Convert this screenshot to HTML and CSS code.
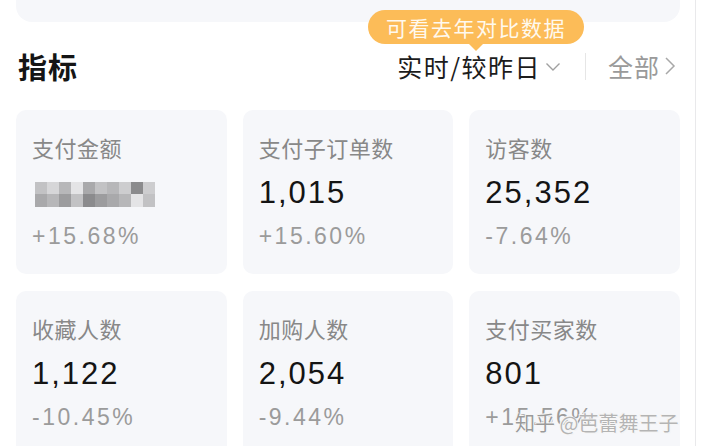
FILE: index.html
```html
<!DOCTYPE html>
<html lang="zh-CN">
<head>
<meta charset="utf-8">
<title>指标</title>
<link rel="stylesheet" href="styles.css">
</head>
<body>
<div class="page">
  <div class="top-card"></div>
  <div class="header">
    <div class="title">指标</div>
    <div class="actions">
      <div class="dropdown">实时/较昨日
        <svg class="chev-down" width="16" height="10" viewBox="0 0 16 10"><path d="M1.5 1.5 L8 8 L14.5 1.5" fill="none" stroke="#a0a0a0" stroke-width="1.4"/></svg>
      </div>
      <div class="divider"></div>
      <div class="all">全部
        <svg class="chev-right" width="12" height="20" viewBox="0 0 12 20"><path d="M2 2 L10 10 L2 18" fill="none" stroke="#a8a8a8" stroke-width="1.5"/></svg>
      </div>
    </div>
  </div>
  <div class="tooltip">可看去年对比数据<span class="tip-arrow"></span></div>
  <div class="grid">
    <div class="card">
      <div class="label">支付金额</div>
      <div class="value">
        <div class="mosaic">
          <i class="s3"></i><i class="s1"></i><i class="s4"></i><i class="s0"></i><i class="s5"></i><i class="s3"></i><i class="s4"></i><i class="s2"></i><i class="s7"></i><i class="s2"></i>
          <i class="s5"></i><i class="s4"></i><i class="s6"></i><i class="s3"></i><i class="s7"></i><i class="s6"></i><i class="s5"></i><i class="s4"></i><i class="s0"></i><i class="s3"></i>
        </div>
      </div>
      <div class="pct">+15.68%</div>
    </div>
    <div class="card">
      <div class="label">支付子订单数</div>
      <div class="value">1,015</div>
      <div class="pct">+15.60%</div>
    </div>
    <div class="card">
      <div class="label">访客数</div>
      <div class="value">25,352</div>
      <div class="pct">-7.64%</div>
    </div>
    <div class="card">
      <div class="label">收藏人数</div>
      <div class="value">1,122</div>
      <div class="pct">-10.45%</div>
    </div>
    <div class="card">
      <div class="label">加购人数</div>
      <div class="value">2,054</div>
      <div class="pct">-9.44%</div>
    </div>
    <div class="card">
      <div class="label">支付买家数</div>
      <div class="value">801</div>
      <div class="pct">+15.56%</div>
    </div>
  </div>
  <div class="watermark"><span class="wm-a">知乎</span> <span class="wm-b">@芭蕾舞王子</span></div>
</div>
</body>
</html>
```
FILE: styles.css
```css
* { box-sizing: border-box; }
html, body {
  margin: 0;
  padding: 0;
  background: #ffffff;
  overflow: hidden;
}
body {
  width: 704px;
  height: 446px;
  font-family: "Liberation Sans", "Noto Sans CJK SC", sans-serif;
}
.page {
  position: relative;
  width: 696px;
  height: 446px;
  border-right: 1px solid #e9e9eb;
  padding: 0 16px 0 16px;
}
.top-card {
  height: 22px;
  width: 664px;
  background: #f6f7fa;
  border-radius: 0 0 16px 16px;
}
.header {
  height: 88px;
  display: flex;
  align-items: center;
  justify-content: space-between;
  width: 664px;
}
.title {
  font-family: "Noto Sans CJK SC", sans-serif;
  font-weight: 700;
  font-size: 29px;
  color: #151515;
  padding-left: 2px;
  letter-spacing: 1px;
}
.actions {
  display: flex;
  align-items: center;
  margin-right: 4px;
}
.dropdown {
  font-family: "Noto Sans CJK SC", sans-serif;
  font-size: 25px;
  color: #1c1c1c;
  letter-spacing: 1.5px;
  display: flex;
  align-items: center;
}
.chev-down {
  margin-left: 4px;
  margin-top: 2px;
}
.divider {
  width: 1px;
  height: 27px;
  background: #e6e6e6;
  margin: 0 22px 0 24px;
}
.all {
  font-family: "Noto Sans CJK SC", sans-serif;
  font-size: 25px;
  color: #9a9a9a;
  letter-spacing: 1px;
  display: flex;
  align-items: center;
}
.chev-right {
  margin-left: 4px;
}
.tooltip {
  position: absolute;
  left: 368px;
  top: 10px;
  width: 216px;
  height: 34px;
  border-radius: 17px;
  background: #fcbc58;
  color: #fff9ee;
  font-family: "Noto Sans CJK SC", sans-serif;
  font-size: 21px;
  line-height: 34px;
  text-align: center;
  letter-spacing: 1.5px;
}
.tip-arrow {
  position: absolute;
  left: 101px;
  bottom: -7px;
  width: 0;
  height: 0;
  border-left: 7px solid transparent;
  border-right: 7px solid transparent;
  border-top: 7px solid #fcbc58;
}
.grid {
  display: grid;
  grid-template-columns: repeat(3, 1fr);
  column-gap: 16px;
  row-gap: 17px;
  width: 664px;
}
.card {
  background: #f6f7fa;
  border-radius: 10px;
  height: 164px;
  padding: 23px 16px 0 16px;
}
.label {
  font-family: "Noto Sans CJK SC", sans-serif;
  font-size: 22px;
  line-height: 28px;
  color: #888888;
  letter-spacing: 0.5px;
}
.value {
  margin-top: 14px;
  height: 36px;
  line-height: 36px;
  font-size: 31px;
  color: #141414;
  letter-spacing: 2px;
  display: flex;
  align-items: center;
}
.pct {
  margin-top: 10px;
  line-height: 30px;
  font-size: 23px;
  color: #9b9b9b;
  letter-spacing: 2.5px;
}
.mosaic {
  display: grid;
  grid-template-columns: repeat(10, 12px);
  grid-template-rows: 12px 13px;
  margin-left: 3px;
  margin-top: 2px;
}
.mosaic i { display: block; }
.s0 { background: #e4e4e6; }
.s1 { background: #d6d6d8; }
.s2 { background: #cdcdcf; }
.s3 { background: #c2c2c4; }
.s4 { background: #b7b7b9; }
.s5 { background: #a9a9ab; }
.s6 { background: #9c9c9e; }
.s7 { background: #8b8b8d; }
.watermark {
  position: absolute;
  left: 515px;
  top: 409px;
  font-family: "Noto Sans CJK SC", sans-serif;
  font-size: 20px;
  line-height: 28px;
  white-space: nowrap;
  text-shadow: 0 0 1px #ffffff, 0 0 2px #ffffff, 1px 1px 0 #f2f2f2, -1px -1px 0 #f2f2f2;
}
.wm-a { color: #9a9a9a; }
.wm-b { color: #b4b4b4; }
```
